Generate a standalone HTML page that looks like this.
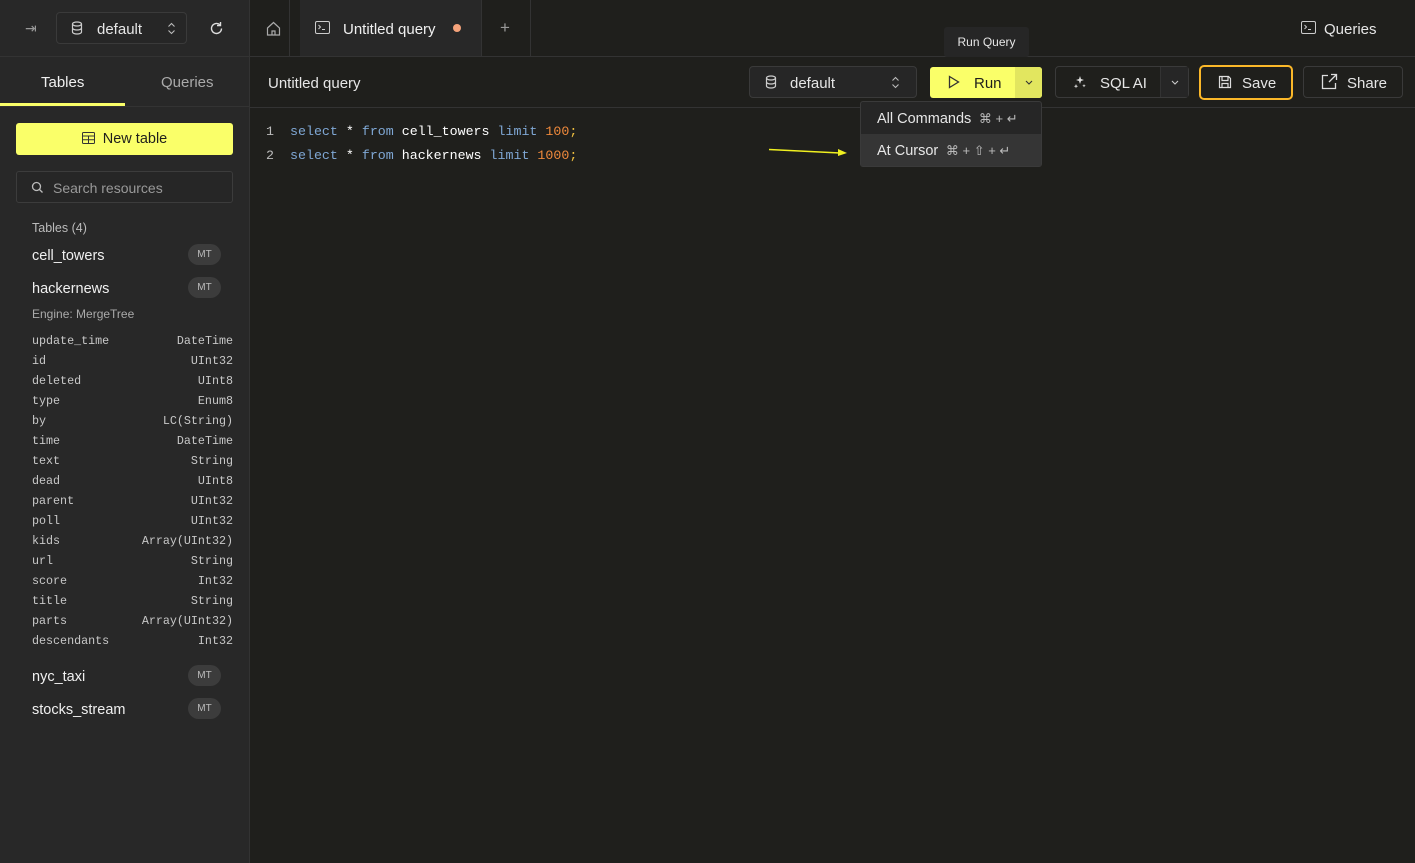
<!DOCTYPE html><html><head><style>
*{box-sizing:border-box;margin:0;padding:0}
body{width:1415px;height:863px;background:#1f1f1c;font-family:"Liberation Sans",sans-serif;color:#e6e6e6;position:relative;overflow:hidden;font-size:14px}
.a{position:absolute}
.mono{font-family:"Liberation Mono",monospace}
.side{left:0;top:57px;width:250px;height:806px;background:#282828;border-right:1px solid #333}
.col{position:absolute;left:32px;width:201px;font-size:11.7px;color:#c8c8c8}
.col span{float:right}
.mt{position:absolute;left:188px;width:33px;height:21px;border-radius:11px;background:#3c3c3c;color:#bbb;font-size:10px;text-align:center;line-height:21px}
.tn{position:absolute;left:32px;font-size:14.5px;color:#f0f0f0}
.btn{position:absolute;border:1px solid #3a3a3a;border-radius:4px;background:#1f1f1c;height:32px;top:66px}
</style></head><body>
<div class="a" style="left:0;top:0;width:250px;height:57px;background:#282828;border-bottom:1px solid #333;border-right:1px solid #333"></div>
<div class="a" style="left:25px;top:20px;color:#999;font-size:14px">⇥</div>
<div class="a" style="left:56px;top:12px;width:131px;height:32px;border:1px solid #3a3a3a;border-radius:4px;background:#262626"></div>
<svg class="a" style="left:71px;top:21px" width="12" height="14" viewBox="0 0 12 14"><ellipse cx="6" cy="3" rx="4.5" ry="2" fill="none" stroke="#ccc" stroke-width="1.2"/><path d="M1.5 3v8c0 1.1 2 2 4.5 2s4.5-.9 4.5-2V3M1.5 7c0 1.1 2 2 4.5 2s4.5-.9 4.5-2" fill="none" stroke="#ccc" stroke-width="1.2"/></svg>
<div class="a" style="left:97px;top:21px;font-size:15px">default</div>
<svg class="a" style="left:167px;top:22px" width="9" height="13"><path d="M1.5 4.5l3-3 3 3M1.5 8.5l3 3 3-3" fill="none" stroke="#bbb" stroke-width="1.1"/></svg>
<svg class="a" style="left:209px;top:21px" width="15" height="15"><path d="M12.5 7.5a5 5 0 1 1-1.6-3.7" fill="none" stroke="#ddd" stroke-width="1.4"/><path d="M11.5 1v3.5H8" fill="none" stroke="#ddd" stroke-width="1.4"/></svg>
<div class="a" style="left:250px;top:0;width:1165px;height:57px;background:#1f1f1c;border-bottom:1px solid #333"></div>
<svg class="a" style="left:266px;top:21px" width="15" height="15"><path d="M1.5 7L7.5 1.5 13.5 7v7h-12z M6 14v-4h3v4" fill="none" stroke="#aaa" stroke-width="1.2"/></svg>
<div class="a" style="left:289px;top:0;width:1px;height:57px;background:#333"></div>
<div class="a" style="left:300px;top:0;width:182px;height:56px;background:#282828;border-right:1px solid #333"></div>
<svg class="a" style="left:315px;top:21px" width="15" height="13"><rect x=".5" y=".5" width="14" height="12" rx="1.5" fill="none" stroke="#ccc"/><path d="M3.5 4l2 2-2 2M7 8.5h3" stroke="#ccc" fill="none"/></svg>
<div class="a" style="left:343px;top:21px;font-size:15px;color:#f0f0f0">Untitled query</div>
<div class="a" style="left:453px;top:24px;width:8px;height:8px;border-radius:50%;background:#f4a27a"></div>
<div class="a" style="left:500px;top:18px;color:#999;font-size:17px">+</div>
<div class="a" style="left:530px;top:0;width:1px;height:57px;background:#333"></div>
<svg class="a" style="left:1301px;top:21px" width="15" height="13"><rect x=".5" y=".5" width="14" height="12" rx="1.5" fill="none" stroke="#ccc"/><path d="M3.5 4l2 2-2 2M7 8.5h3" stroke="#ccc" fill="none"/></svg>
<div class="a" style="left:1324px;top:21px;font-size:15px">Queries</div>
<div class="a side"></div>
<div class="a" style="left:41px;top:74px;font-size:15px;color:#f0f0f0">Tables</div>
<div class="a" style="left:161px;top:74px;font-size:15px;color:#aaa">Queries</div>
<div class="a" style="left:0;top:103px;width:125px;height:3px;background:#faff69"></div>
<div class="a" style="left:0;top:106px;width:250px;height:1px;background:#333"></div>
<div class="a" style="left:16px;top:123px;width:217px;height:32px;background:#faff69;border-radius:3px;color:#1f1f1c;font-size:14.5px;text-align:center;line-height:32px"><svg width="13" height="12" style="vertical-align:-1px;margin-right:8px"><rect x=".5" y=".5" width="12" height="11" rx="1" fill="none" stroke="#333"/><path d="M.5 4h12M.5 7.7h12M6.5 4v7.5" stroke="#333" fill="none"/></svg>New table</div>
<div class="a" style="left:16px;top:171px;width:217px;height:32px;border:1px solid #3c3c3c;border-radius:3px;background:#262626"></div>
<svg class="a" style="left:31px;top:181px" width="13" height="13"><circle cx="5.5" cy="5.5" r="4" fill="none" stroke="#bbb" stroke-width="1.3"/><path d="M8.5 8.5l3 3" stroke="#bbb" stroke-width="1.3"/></svg>
<div class="a" style="left:53px;top:180px;color:#999;font-size:14px">Search resources</div>
<div class="a" style="left:32px;top:221px;font-size:12.5px;color:#bbb">Tables (4)</div>
<div class="tn" style="top:248px">cell_towers</div><div class="mt" style="top:244px">MT</div>
<div class="tn" style="top:281px">hackernews</div><div class="mt" style="top:277px">MT</div>
<div class="a" style="left:32px;top:307px;font-size:12px;color:#aaa">Engine: MergeTree</div>
<div class="mono">
<div class="col" style="top:334px">update_time<span>DateTime</span></div>
<div class="col" style="top:354px">id<span>UInt32</span></div>
<div class="col" style="top:374px">deleted<span>UInt8</span></div>
<div class="col" style="top:394px">type<span>Enum8</span></div>
<div class="col" style="top:414px">by<span>LC(String)</span></div>
<div class="col" style="top:434px">time<span>DateTime</span></div>
<div class="col" style="top:454px">text<span>String</span></div>
<div class="col" style="top:474px">dead<span>UInt8</span></div>
<div class="col" style="top:494px">parent<span>UInt32</span></div>
<div class="col" style="top:514px">poll<span>UInt32</span></div>
<div class="col" style="top:534px">kids<span>Array(UInt32)</span></div>
<div class="col" style="top:554px">url<span>String</span></div>
<div class="col" style="top:574px">score<span>Int32</span></div>
<div class="col" style="top:594px">title<span>String</span></div>
<div class="col" style="top:614px">parts<span>Array(UInt32)</span></div>
<div class="col" style="top:634px">descendants<span>Int32</span></div>
</div>
<div class="tn" style="top:669px">nyc_taxi</div><div class="mt" style="top:665px">MT</div>
<div class="tn" style="top:702px">stocks_stream</div><div class="mt" style="top:698px">MT</div>
<div class="a" style="left:268px;top:75px;font-size:15px">Untitled query</div>
<div class="a" style="left:250px;top:107px;width:1165px;height:1px;background:#333"></div>
<div class="btn" style="left:749px;width:168px;background:#262626"></div>
<svg class="a" style="left:765px;top:75px" width="12" height="14" viewBox="0 0 12 14"><ellipse cx="6" cy="3" rx="4.5" ry="2" fill="none" stroke="#ccc" stroke-width="1.2"/><path d="M1.5 3v8c0 1.1 2 2 4.5 2s4.5-.9 4.5-2V3M1.5 7c0 1.1 2 2 4.5 2s4.5-.9 4.5-2" fill="none" stroke="#ccc" stroke-width="1.2"/></svg>
<div class="a" style="left:790px;top:75px;font-size:15px">default</div>
<svg class="a" style="left:891px;top:76px" width="9" height="13"><path d="M1.5 4.5l3-3 3 3M1.5 8.5l3 3 3-3" fill="none" stroke="#bbb" stroke-width="1.1"/></svg>
<div class="a" style="left:930px;top:67px;width:112px;height:31px;background:#faff69;border-radius:3px"></div>
<div class="a" style="left:1015px;top:67px;width:27px;height:31px;background:#e2e65f;border-radius:0 3px 3px 0"></div>
<svg class="a" style="left:948px;top:75px" width="12" height="14"><path d="M1.5 1.5l9 5.5-9 5.5z" fill="none" stroke="#333" stroke-width="1.3"/></svg>
<div class="a" style="left:974px;top:75px;font-size:15px;color:#1f1f1c">Run</div>
<svg class="a" style="left:1025px;top:80px" width="8" height="5"><path d="M1 1l3 3 3-3" fill="none" stroke="#333" stroke-width="1.1"/></svg>
<div class="btn" style="left:1055px;width:134px"></div>
<div class="a" style="left:1160px;top:67px;width:28px;height:30px;background:#262626;border-left:1px solid #333"></div>
<svg class="a" style="left:1073px;top:75px" width="14" height="14"><path d="M7 1l1 3 3 1-3 1-1 3-1-3-3-1 3-1z M3 9l.6 1.6 1.6.6-1.6.6L3 13.4l-.6-1.6-1.6-.6 1.6-.6z M11 9l.5 1.2 1.2.5-1.2.5-.5 1.2-.5-1.2-1.2-.5 1.2-.5z" fill="#ddd"/></svg>
<div class="a" style="left:1100px;top:75px;font-size:15px">SQL AI</div>
<svg class="a" style="left:1171px;top:80px" width="8" height="5"><path d="M1 1l3 3 3-3" fill="none" stroke="#ccc" stroke-width="1.1"/></svg>
<div class="a" style="left:1199px;top:65px;width:94px;height:35px;border:2px solid #fbb829;border-radius:5px"></div>
<svg class="a" style="left:1218px;top:75px" width="14" height="14"><path d="M1.5 1.5h9l2 2v9h-11z M4 1.5v4h6v-4 M4 12.5v-4h6v4" fill="none" stroke="#ddd" stroke-width="1.2"/></svg>
<div class="a" style="left:1242px;top:75px;font-size:15px">Save</div>
<div class="btn" style="left:1303px;width:100px"></div>
<svg class="a" style="left:1321px;top:73px" width="17" height="17"><path d="M7 2.5H1.5v13h13V10M10 1.5h5.5V7M15.5 1.5L8 9" fill="none" stroke="#ddd" stroke-width="1.3"/></svg>
<div class="a" style="left:1347px;top:75px;font-size:15px">Share</div>
<div class="a" style="left:944px;top:27px;width:85px;height:30px;background:#262626;border-radius:3px;font-size:12px;text-align:center;line-height:30px">Run Query</div>
<div class="a" style="left:860px;top:101px;width:182px;height:66px;background:#262626;border:1px solid #3a3a3a;border-radius:3px"></div>
<div class="a" style="left:861px;top:134px;width:180px;height:32px;background:#353535"></div>
<div class="a" style="left:877px;top:111px;font-size:14.5px">All Commands <span style="color:#bbb;font-size:13px">&nbsp;⌘ + ↵</span></div>
<div class="a" style="left:877px;top:143px;font-size:14.5px">At Cursor <span style="color:#bbb;font-size:13px">&nbsp;⌘ + ⇧ + ↵</span></div>
<svg class="a" style="left:768px;top:145px" width="82" height="14"><path d="M1 4.5L72 8" stroke="#f0f020" stroke-width="1.5"/><path d="M70 4l9 4-9 3z" fill="#f0f020"/></svg>
<div class="a mono" style="left:266px;top:120px;font-size:13.3px;line-height:24px;color:#bbb">1<br>2</div>
<div class="a mono" style="left:290px;top:120px;font-size:13.3px;line-height:24px;color:#fff;white-space:pre"><span style="color:#7fa7d4">select</span> * <span style="color:#7fa7d4">from</span> cell_towers <span style="color:#7fa7d4">limit</span> <span style="color:#f08a3c">100</span><span style="color:#f0c040">;</span>
<span style="color:#7fa7d4">select</span> * <span style="color:#7fa7d4">from</span> hackernews <span style="color:#7fa7d4">limit</span> <span style="color:#f08a3c">1000</span><span style="color:#f0c040">;</span></div>
</body></html>
